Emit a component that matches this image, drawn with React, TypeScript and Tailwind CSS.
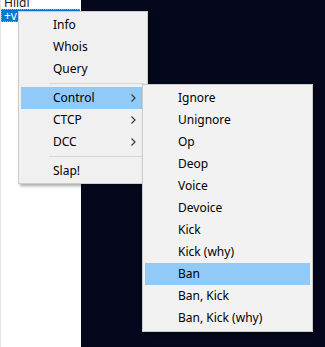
import React from "react"

const mainItems: ({ label: string; sub?: boolean; active?: boolean } | "sep")[] = [
    { label: "Info" },
    { label: "Whois" },
    { label: "Query" },
    "sep",
    { label: "Control", sub: true, active: true },
    { label: "CTCP", sub: true },
    { label: "DCC", sub: true },
    "sep",
    { label: "Slap!" },
]

const controlItems = [
    "Ignore",
    "Unignore",
    "Op",
    "Deop",
    "Voice",
    "Devoice",
    "Kick",
    "Kick (why)",
    "Ban",
    "Ban, Kick",
    "Ban, Kick (why)",
]

const Chevron = () => (
    <svg width="5" height="8" viewBox="0 0 5 8" className="shrink-0">
        <path d="M0.5 0.5 L4 4 L0.5 7.5" fill="none" stroke="#3c3c3c" strokeWidth="1.2" />
    </svg>
)

const App: React.FC = () => {
    return (
        <div
            className="relative w-[325px] h-[347px] overflow-hidden flex text-[12px] text-black"
            style={{ fontFamily: '"Noto Sans", "Open Sans", sans-serif' }}
        >
            {/* nick list */}
            <div className="w-[81px] h-full bg-white border-l border-[#e3e3e3] flex flex-col">
                <div className="h-[13px] mt-[-4px] shrink-0 overflow-hidden pl-[3px] leading-[13px] text-[#1a1a1a]">Hildi</div>
                <div className="h-[13px] shrink-0 mr-[1px] bg-[#0078d7] border border-dotted border-[#f0a030] pl-[2px] leading-[11px] text-white">
                    +v
                </div>
            </div>

            {/* channel area */}
            <div className="flex-1 h-full bg-[#05071d]" />

            {/* main popup */}
            <div className="absolute left-[18px] top-[11px] w-[130px] bg-[#f0f0f0] border border-[#cccccc] p-[2px] pb-[1px] shadow-[2px_2px_3px_rgba(0,0,0,0.35)]">
                {mainItems.map((item, i) =>
                    item === "sep" ? (
                        <div key={i} className="h-[7px] flex items-center pl-[28px] pr-[1px]">
                            <div className="h-px w-full bg-[#d7d7d7]" />
                        </div>
                    ) : (
                        <div
                            key={i}
                            className={`h-[22px] flex items-center pl-[32px] pr-[9px] ${item.active ? "bg-[#91c9f7]" : ""}`}
                        >
                            <span className="flex-1">{item.label}</span>
                            {item.sub && <Chevron />}
                        </div>
                    )
                )}
            </div>

            {/* Control submenu */}
            <div className="absolute left-[142px] top-[84px] w-[171px] bg-[#f2f2f2] border border-[#cccccc] p-[2px] shadow-[2px_2px_3px_rgba(0,0,0,0.35)]">
                {controlItems.map((label) => (
                    <div
                        key={label}
                        className={`h-[22px] flex items-center pl-[33px] ${label === "Ban" ? "bg-[#91c9f7]" : ""}`}
                    >
                        {label}
                    </div>
                ))}
            </div>
        </div>
    )
}

export default App
